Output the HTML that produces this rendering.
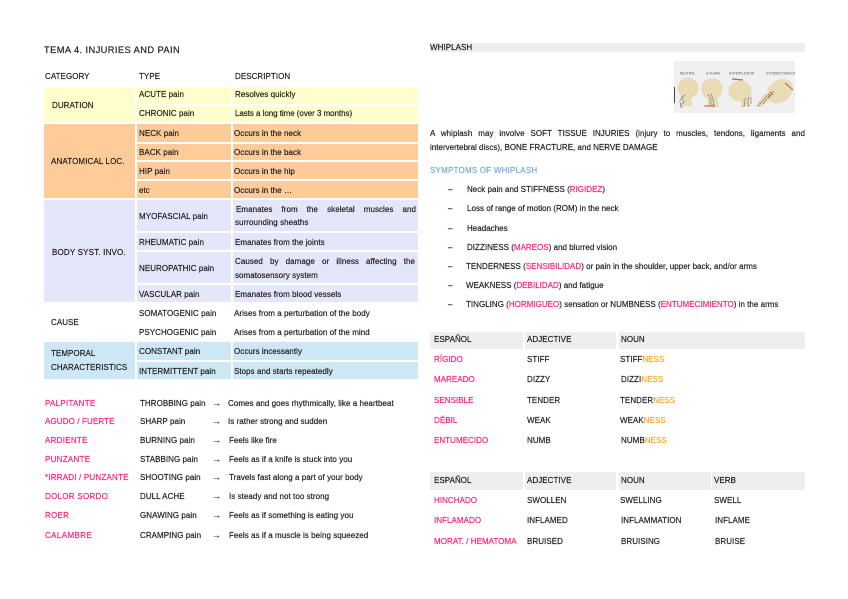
<!DOCTYPE html>
<html><head><meta charset="utf-8"><style>
html,body{margin:0;padding:0;background:#fff}
#p{position:relative;width:848px;height:599px;overflow:hidden;background:#fff;font-family:"Liberation Sans",sans-serif;font-size:8px;color:#1c1c1c;letter-spacing:.05px;-webkit-text-stroke:.18px currentColor;filter:blur(.25px)}
#p div{position:absolute}
.t{white-space:pre;line-height:10px;height:10px;margin-top:1px}
.j{text-align:justify;text-align-last:justify;white-space:normal}
.r{color:#ff1f78}.o{color:#ffa726}
.k{color:#ff1f78;letter-spacing:.28px}
.u{letter-spacing:.02px}
.w{margin-top:0;color:#444;font-size:9px}
.b{background:#eee}
.y{background:#ffc}.a{background:#fc9}.l{background:#e6e6fb}.s{background:#cee7f5}
</style></head><body><div id="p">
<div class="t" style="left:44px;top:44px;font-size:9.3px;letter-spacing:.41px">TEMA 4. INJURIES AND PAIN</div>
<div class="t" style="left:45px;top:71px">CATEGORY</div><div class="t" style="left:139px;top:71px">TYPE</div><div class="t" style="left:235px;top:71px">DESCRIPTION</div>

<div class="y" style="left:44px;top:87px;width:91px;height:35px"></div>
<div class="y" style="left:137px;top:87px;width:94px;height:17px"></div><div class="y" style="left:233px;top:87px;width:185px;height:17px"></div>
<div class="y" style="left:137px;top:106px;width:94px;height:16px"></div><div class="y" style="left:233px;top:106px;width:185px;height:16px"></div>
<div class="a" style="left:44px;top:124px;width:91px;height:74px"></div>
<div class="a" style="left:137px;top:124px;width:94px;height:18px"></div><div class="a" style="left:233px;top:124px;width:185px;height:18px"></div>
<div class="a" style="left:137px;top:144px;width:94px;height:16px"></div><div class="a" style="left:233px;top:144px;width:185px;height:16px"></div>
<div class="a" style="left:137px;top:162px;width:94px;height:17px"></div><div class="a" style="left:233px;top:162px;width:185px;height:17px"></div>
<div class="a" style="left:137px;top:181px;width:94px;height:17px"></div><div class="a" style="left:233px;top:181px;width:185px;height:17px"></div>
<div class="l" style="left:44px;top:200px;width:91px;height:102px"></div>
<div class="l" style="left:137px;top:200px;width:94px;height:31px"></div><div class="l" style="left:233px;top:200px;width:185px;height:31px"></div>
<div class="l" style="left:137px;top:233px;width:94px;height:17px"></div><div class="l" style="left:233px;top:233px;width:185px;height:17px"></div>
<div class="l" style="left:137px;top:252px;width:94px;height:31px"></div><div class="l" style="left:233px;top:252px;width:185px;height:31px"></div>
<div class="l" style="left:137px;top:285px;width:94px;height:17px"></div><div class="l" style="left:233px;top:285px;width:185px;height:17px"></div>
<div class="s" style="left:44px;top:342px;width:91px;height:37px"></div>
<div class="s" style="left:137px;top:342px;width:94px;height:18px"></div><div class="s" style="left:233px;top:342px;width:185px;height:18px"></div>
<div class="s" style="left:137px;top:362px;width:94px;height:17px"></div><div class="s" style="left:233px;top:362px;width:185px;height:17px"></div>

<div class="t" style="left:52px;top:100px">DURATION</div>
<div class="t" style="left:51px;top:156px;letter-spacing:.12px">ANATOMICAL LOC.</div>
<div class="t" style="left:52px;top:247px;letter-spacing:.18px">BODY SYST. INVO.</div>
<div class="t" style="left:51px;top:317px">CAUSE</div>
<div class="t" style="left:51px;top:348px">TEMPORAL</div>
<div class="t" style="left:51px;top:362px">CHARACTERISTICS</div>

<div class="t" style="left:139px;top:89px">ACUTE pain</div><div class="t" style="left:235px;top:89px">Resolves quickly</div>
<div class="t" style="left:139px;top:108px">CHRONIC pain</div><div class="t" style="left:235px;top:108px;letter-spacing:-.05px">Lasts a long time (over 3 months)</div>
<div class="t" style="left:139px;top:128px">NECK pain</div><div class="t" style="left:234px;top:128px">Occurs in the neck</div>
<div class="t" style="left:139px;top:147px">BACK pain</div><div class="t" style="left:234px;top:147px">Occurs in the back</div>
<div class="t" style="left:139px;top:166px">HIP pain</div><div class="t" style="left:234px;top:166px">Occurs in the hip</div>
<div class="t" style="left:139px;top:185px">etc</div><div class="t" style="left:234px;top:185px">Occurs in the …</div>
<div class="t" style="left:139px;top:211px">MYOFASCIAL pain</div>
<div class="t j" style="left:236px;top:204px;width:180px">Emanates from the skeletal muscles and</div>
<div class="t" style="left:235px;top:217px">surrounding sheaths</div>
<div class="t" style="left:139px;top:237px">RHEUMATIC pain</div><div class="t" style="left:235px;top:237px">Emanates from the joints</div>
<div class="t" style="left:139px;top:263px">NEUROPATHIC pain</div>
<div class="t j" style="left:235px;top:256px;width:180px">Caused by damage or illness affecting the</div>
<div class="t" style="left:235px;top:270px">somatosensory system</div>
<div class="t" style="left:139px;top:289px">VASCULAR pain</div><div class="t" style="left:235px;top:289px">Emanates from blood vessels</div>
<div class="t" style="left:139px;top:308px">SOMATOGENIC pain</div><div class="t" style="left:234px;top:308px">Arises from a perturbation of the body</div>
<div class="t" style="left:139px;top:327px">PSYCHOGENIC pain</div><div class="t" style="left:234px;top:327px">Arises from a perturbation of the mind</div>
<div class="t" style="left:139px;top:346px">CONSTANT pain</div><div class="t" style="left:234px;top:346px">Occurs incessantly</div>
<div class="t" style="left:139px;top:366px">INTERMITTENT pain</div><div class="t" style="left:234px;top:366px">Stops and starts repeatedly</div>

<div class="t k" style="left:45px;top:398px">PALPITANTE</div><div class="t" style="left:140px;top:398px">THROBBING pain</div><div class="t w" style="left:212px;top:398px">→</div><div class="t" style="left:228px;top:398px">Comes and goes rhythmically, like a heartbeat</div>
<div class="t k" style="left:45px;top:416px;letter-spacing:.12px">AGUDO / FUERTE</div><div class="t" style="left:140px;top:416px">SHARP pain</div><div class="t w" style="left:212px;top:416px">→</div><div class="t" style="left:228px;top:416px">Is rather strong and sudden</div>
<div class="t k" style="left:45px;top:435px">ARDIENTE</div><div class="t" style="left:140px;top:435px">BURNING pain</div><div class="t w" style="left:212px;top:435px">→</div><div class="t" style="left:229px;top:435px">Feels like fire</div>
<div class="t k" style="left:45px;top:454px">PUNZANTE</div><div class="t" style="left:140px;top:454px">STABBING pain</div><div class="t w" style="left:212px;top:454px">→</div><div class="t" style="left:229px;top:454px">Feels as if a knife is stuck into you</div>
<div class="t k" style="left:45px;top:472px;letter-spacing:.2px">*IRRADI / PUNZANTE</div><div class="t" style="left:140px;top:472px">SHOOTING pain</div><div class="t w" style="left:212px;top:472px">→</div><div class="t" style="left:229px;top:472px">Travels fast along a part of your body</div>
<div class="t k" style="left:45px;top:491px">DOLOR SORDO</div><div class="t" style="left:140px;top:491px">DULL ACHE</div><div class="t w" style="left:212px;top:491px">→</div><div class="t" style="left:229px;top:491px">Is steady and not too strong</div>
<div class="t k" style="left:45px;top:510px">ROER</div><div class="t" style="left:140px;top:510px">GNAWING pain</div><div class="t w" style="left:212px;top:510px">→</div><div class="t" style="left:229px;top:510px">Feels as if something is eating you</div>
<div class="t k" style="left:45px;top:530px;letter-spacing:.4px">CALAMBRE</div><div class="t" style="left:140px;top:530px">CRAMPING pain</div><div class="t w" style="left:212px;top:530px">→</div><div class="t" style="left:229px;top:530px">Feels as if a muscle is being squeezed</div>

<div class="b" style="left:430px;top:43px;width:375px;height:9px"></div>
<div class="t" style="left:430px;top:42px">WHIPLASH</div>

<svg style="position:absolute;left:674px;top:61px" width="121" height="52" viewBox="674 61 121 52">
<rect x="674" y="61" width="121" height="52" fill="#f0f0f0"/>
<text x="680" y="74.5" font-family="Liberation Sans" font-size="3.2" fill="#555">NEUTRAL</text>
<text x="706" y="74.5" font-family="Liberation Sans" font-size="3.2" fill="#555">S-SHAPE</text>
<text x="729" y="74.5" font-family="Liberation Sans" font-size="3.2" fill="#555">HYPERFLEXION</text>
<text x="766" y="74.5" font-family="Liberation Sans" font-size="3.2" fill="#555">HYPEREXTENSION</text>
<rect x="674" y="87" width="1" height="16" fill="#444"/>
<g fill="#e9dbb4">
<ellipse cx="688" cy="88" rx="10.5" ry="10.5"/><path d="M683 96h8l1 10h-10zM696 86l3 4-3 2z"/>
<ellipse cx="712" cy="89" rx="10.5" ry="11"/><path d="M708 97h9l2 10h-12z"/>
<ellipse cx="740" cy="91" rx="11.5" ry="10.5"/><path d="M742 98l6-2 2 11h-9z"/>
<ellipse cx="780" cy="91" rx="11" ry="14" transform="rotate(50 780 91)"/><path d="M765 93l8 4-12 10h-6z"/>
</g>
<g stroke="#777" stroke-width="1.1" fill="none" stroke-dasharray="1.5 1">
<path d="M685 95l-3 4 2 3-3 3 1 3"/><path d="M682 96l-2 5 1 6"/>
<path d="M708 95l3 4-1 3 3 4"/><path d="M711 94l2 5 1 8"/>
<path d="M746 98l-2 3 1 3-2 3"/><path d="M749 97l-1 5 1 5"/>
<path d="M773 94l-6 5-4 5"/><path d="M771 92l-7 7-6 7"/>
</g>
<path d="M704 106h11" stroke="#c0623a" stroke-width="1"/>
<path d="M732 79l11 1" stroke="#c0623a" stroke-width="1.2"/>
<path d="M785 83l8 7" stroke="#c0623a" stroke-width="1"/>
<path d="M751 97v7" stroke="#c0623a" stroke-width=".7"/>
<path d="M768 97l6-6" stroke="#c0623a" stroke-width=".8"/>
</svg>

<div class="t j" style="left:430px;top:128px;width:375px">A whiplash may involve SOFT TISSUE INJURIES (injury to muscles, tendons, ligaments and</div>
<div class="t" style="left:430px;top:142px;letter-spacing:.01px">intervertebral discs), BONE FRACTURE, and NERVE DAMAGE</div>
<div class="t" style="left:430px;top:165px;color:#74a9dc;letter-spacing:.22px">SYMPTOMS OF WHIPLASH</div>

<div class="t" style="left:448px;top:184px">–</div><div class="t u" style="left:467px;top:184px">Neck pain and STIFFNESS (<span class="r">RIGIDEZ</span>)</div>
<div class="t" style="left:448px;top:203px">–</div><div class="t u" style="left:467px;top:203px">Loss of range of motion (ROM) in the neck</div>
<div class="t" style="left:448px;top:223px">–</div><div class="t u" style="left:467px;top:223px">Headaches</div>
<div class="t" style="left:448px;top:242px">–</div><div class="t u" style="left:467px;top:242px">DIZZINESS (<span class="r">MAREOS</span>) and blurred vision</div>
<div class="t" style="left:448px;top:261px">–</div><div class="t u" style="left:466px;top:261px">TENDERNESS (<span class="r">SENSIBILIDAD</span>) or pain in the shoulder, upper back, and/or arms</div>
<div class="t" style="left:448px;top:280px">–</div><div class="t u" style="left:466px;top:280px">WEAKNESS (<span class="r">DEBILIDAD</span>) and fatigue</div>
<div class="t" style="left:448px;top:299px">–</div><div class="t u" style="left:466px;top:299px">TINGLING (<span class="r">HORMIGUEO</span>) sensation or NUMBNESS (<span class="r">ENTUMECIMIENTO</span>) in the arms</div>

<div class="b" style="left:430px;top:332px;width:93px;height:17px"></div><div class="b" style="left:525px;top:332px;width:91px;height:17px"></div><div class="b" style="left:619px;top:332px;width:186px;height:17px"></div>
<div class="t" style="left:434px;top:334px">ESPAÑOL</div><div class="t" style="left:527px;top:334px">ADJECTIVE</div><div class="t" style="left:621px;top:334px">NOUN</div>
<div class="t r" style="left:434px;top:354px">RÍGIDO</div><div class="t" style="left:527px;top:354px">STIFF</div><div class="t" style="left:620px;top:354px">STIFF<span class="o">NESS</span></div>
<div class="t r" style="left:434px;top:374px">MAREADO</div><div class="t" style="left:527px;top:374px">DIZZY</div><div class="t" style="left:621px;top:374px">DIZZI<span class="o">NESS</span></div>
<div class="t r" style="left:434px;top:395px">SENSIBLE</div><div class="t" style="left:527px;top:395px">TENDER</div><div class="t" style="left:620px;top:395px">TENDER<span class="o">NESS</span></div>
<div class="t r" style="left:434px;top:415px">DÉBIL</div><div class="t" style="left:527px;top:415px">WEAK</div><div class="t" style="left:620px;top:415px">WEAK<span class="o">NESS</span></div>
<div class="t r" style="left:434px;top:435px">ENTUMECIDO</div><div class="t" style="left:527px;top:435px">NUMB</div><div class="t" style="left:621px;top:435px">NUMB<span class="o">NESS</span></div>

<div class="b" style="left:430px;top:472px;width:93px;height:18px"></div><div class="b" style="left:525px;top:472px;width:91px;height:18px"></div><div class="b" style="left:619px;top:472px;width:92px;height:18px"></div><div class="b" style="left:712px;top:472px;width:93px;height:18px"></div>
<div class="t" style="left:434px;top:475px">ESPAÑOL</div><div class="t" style="left:527px;top:475px">ADJECTIVE</div><div class="t" style="left:621px;top:475px">NOUN</div><div class="t" style="left:714px;top:475px">VERB</div>
<div class="t r" style="left:434px;top:495px">HINCHADO</div><div class="t" style="left:527px;top:495px">SWOLLEN</div><div class="t" style="left:620px;top:495px">SWELLING</div><div class="t" style="left:714px;top:495px">SWELL</div>
<div class="t r" style="left:434px;top:515px">INFLAMADO</div><div class="t" style="left:527px;top:515px">INFLAMED</div><div class="t" style="left:621px;top:515px">INFLAMMATION</div><div class="t" style="left:715px;top:515px">INFLAME</div>
<div class="t r" style="left:434px;top:536px">MORAT. / HEMATOMA</div><div class="t" style="left:527px;top:536px">BRUISED</div><div class="t" style="left:621px;top:536px">BRUISING</div><div class="t" style="left:715px;top:536px">BRUISE</div>
</div></body></html>
